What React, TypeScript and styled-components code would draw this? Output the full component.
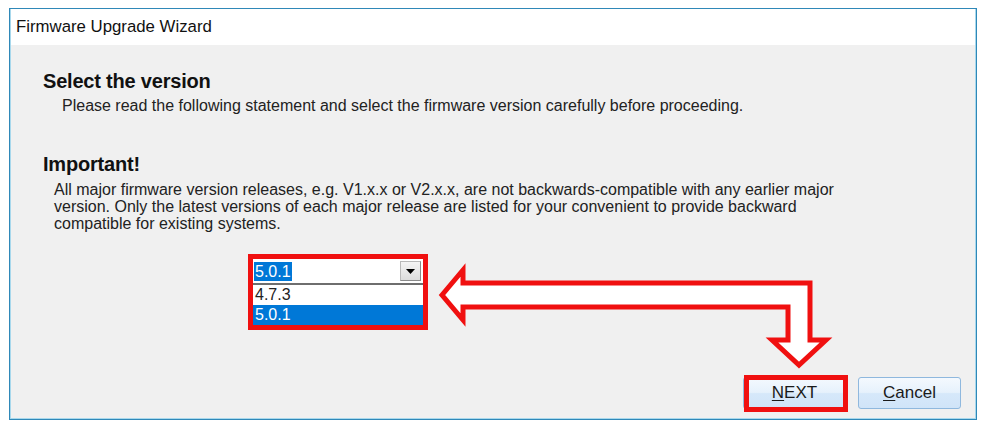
import styled, { createGlobalStyle } from "styled-components";

const GlobalStyle = createGlobalStyle`
  html, body {
    margin: 0;
    padding: 0;
    background: #ffffff;
  }
  body {
    font-family: "Liberation Sans", Arial, sans-serif;
    color: #1a1a1a;
  }
`;

const Window = styled.div`
  position: relative;
  box-sizing: border-box;
  width: 968px;
  height: 412px;
  margin: 8px 0 0 9px;
  border: 1px solid #2f88b8;
  box-shadow: inset 0 0 0 1px #a8d8ec;
  display: flex;
  flex-direction: column;
  background: #f0f0f0;
`;

const TitleBar = styled.div`
  height: 36px;
  display: flex;
  align-items: center;
  padding-left: 5px;
  background: #ffffff;
  font-size: 16.8px;
  color: #111;
  margin: 0 1px;
`;

const Body = styled.div`
  flex: 1;
  display: flex;
  flex-direction: column;
  padding: 25px 0 0 33px;
`;

const Heading = styled.div<{ gap?: number }>`
  font-size: 20px;
  font-weight: 700;
  line-height: 23px;
  color: #111;
  margin-top: ${(p) => p.gap ?? 0}px;
  letter-spacing: -0.2px;
`;

const Text = styled.div<{ indent: number; gap: number }>`
  font-size: 16px;
  line-height: 17px;
  color: #222;
  padding-left: ${(p) => p.indent}px;
  margin-top: ${(p) => p.gap}px;
`;

const ComboHighlight = styled.div`
  align-self: flex-start;
  margin: 22px 0 0 205px;
  border: 5px solid #f01010;
  width: 170px;
  background: #ffffff;
`;

const ComboField = styled.div`
  height: 24px;
  display: flex;
  align-items: center;
  justify-content: space-between;
  padding: 0 2px 0 1px;
  border-bottom: 2px solid #6e6e6e;
`;

const SelectedText = styled.span`
  background: #0078d7;
  color: #ffffff;
  font-size: 16px;
  line-height: 19px;
  padding: 0 1px;
`;

const DropButton = styled.div`
  width: 21px;
  height: 20px;
  box-sizing: border-box;
  border: 1px solid #b9b9b9;
  border-bottom-color: #8a8a8a;
  border-right-color: #8a8a8a;
  background: linear-gradient(#f4f4f4, #dcdcdc);
  display: flex;
  align-items: center;
  justify-content: center;
`;

const Option = styled.div<{ selected?: boolean }>`
  height: 20px;
  line-height: 20px;
  font-size: 16px;
  padding-left: 2px;
  background: ${(p) => (p.selected ? "#0078d7" : "#ffffff")};
  color: ${(p) => (p.selected ? "#ffffff" : "#222")};
`;

const Footer = styled.div`
  margin-top: auto;
  display: flex;
  justify-content: flex-end;
  gap: 12px;
  padding: 0 15px 10px 0;
`;

const Button = styled.button<{ marked?: boolean }>`
  position: relative;
  width: 103px;
  height: 32px;
  box-sizing: border-box;
  border: 1px solid #8fb8de;
  border-radius: 3px;
  background: linear-gradient(#f4f9fe 0%, #e6f1fc 48%, #d6e8fa 52%, #d0e4f8 100%);
  font-family: "Liberation Sans", Arial, sans-serif;
  font-size: 17px;
  color: #1a1a1a;
  padding: 0;

  u {
    text-underline-offset: 2px;
  }

  ${(p) =>
    p.marked &&
    `
    &::after {
      content: "";
      position: absolute;
      left: 0;
      right: -3px;
      top: -3px;
      bottom: -4px;
      border: 5px solid #f01010;
    }
  `}
`;

const Overlay = styled.svg`
  position: absolute;
  left: -1px;
  top: -1px;
  pointer-events: none;
`;

export default function App() {
  return (
    <>
      <GlobalStyle />
      <Window>
        <TitleBar>Firmware Upgrade Wizard</TitleBar>
        <Body>
          <Heading>Select the version</Heading>
          <Text indent={19} gap={4}>
            Please read the following statement and select the firmware version carefully before proceeding.
          </Text>
          <Heading gap={39}>Important!</Heading>
          <Text indent={11} gap={5}>
            All major firmware version releases, e.g. V1.x.x or V2.x.x, are not backwards-compatible with any earlier major
            <br />
            version. Only the latest versions of each major release are listed for your convenient to provide backward
            <br />
            compatible for existing systems.
          </Text>
          <ComboHighlight>
            <ComboField>
              <SelectedText>5.0.1</SelectedText>
              <DropButton>
                <svg width="9" height="5" viewBox="0 0 9 5">
                  <path d="M0 0 H9 L4.5 5 Z" fill="#000" />
                </svg>
              </DropButton>
            </ComboField>
            <Option>4.7.3</Option>
            <Option selected>5.0.1</Option>
          </ComboHighlight>
          <Footer>
            <Button marked>
              <u>N</u>EXT
            </Button>
            <Button>
              <u>C</u>ancel
            </Button>
          </Footer>
        </Body>
        <Overlay width="968" height="412" viewBox="9 8 968 412">
          <path
            d="M442 295 L463 270 L463 283 L810 283 L810 340 L826 340 L799 365 L772 340 L788 340 L788 307 L463 307 L463 320 Z"
            fill="#ffffff"
            stroke="#f01010"
            strokeWidth="5"
            strokeLinejoin="miter"
          />
        </Overlay>
      </Window>
    </>
  );
}
